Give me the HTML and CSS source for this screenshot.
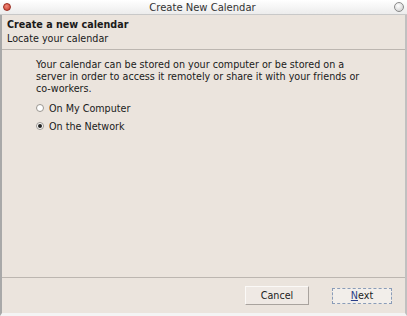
FILE: index.html
```html
<!DOCTYPE html>
<html lang="en">
<head>
<meta charset="UTF-8" />
<title>Create New Calendar</title>
<link rel="stylesheet" href="styles.css">
</head>
<body>
  <div class="window">
    <div class="titlebar">
      <span class="dot close"></span>
      <span class="title">Create New Calendar</span>
      <span class="dot max"></span>
    </div>

    <div class="frame">
      <div class="header">
        <div class="heading">Create a new calendar</div>
        <div class="subheading">Locate your calendar</div>
      </div>

      <div class="content">
        <p class="intro">Your calendar can be stored on your computer or be stored on a server in order to access it remotely or share it with your friends or co-workers.</p>
        <label class="radio"><span class="circle"></span>On My Computer</label>
        <label class="radio"><span class="circle checked"></span>On the Network</label>
      </div>

      <div class="footer">
        <button class="btn">Cancel</button>
        <button class="btn focused"><u>N</u>ext</button>
      </div>
    </div>
  </div>
</body>
</html>
```

FILE: styles.css
```css
html, body {
  margin: 0;
  padding: 0;
}
body {
  font-family: 'DejaVu Sans', Verdana, sans-serif;
  font-size: 9.6px;
  color: #1a1a1a;
  background: #ffffff;
}
.window {
  width: 407px;
  height: 316px;
  display: flex;
  flex-direction: column;
}
.titlebar {
  height: 14px;
  display: flex;
  align-items: center;
  padding: 0 3px;
  background: linear-gradient(#ffffff, #ececec);
  border-bottom: 1px solid #c8c8c8;
}
.title {
  flex: 1;
  text-align: center;
  font-size: 10px;
  color: #333;
}
.dot {
  width: 8px;
  height: 8px;
  border-radius: 50%;
  box-sizing: border-box;
}
.dot.close {
  background: radial-gradient(circle at 40% 35%, #f08a7a, #c83a2a);
  border: 1px solid #9a2a1e;
}
.dot.max {
  width: 10px;
  height: 10px;
  background: radial-gradient(circle at 40% 35%, #ffffff, #c8c8c8);
  border: 1.5px solid #8a8a8a;
}
.frame {
  flex: 1;
  display: flex;
  flex-direction: column;
  background: #ebe4dd;
  border-left: 2px solid #a8a8a8;
  border-right: 2px solid #c0c0c0;
  border-bottom: 3px solid #f4f4f4;
}
.header {
  padding: 3px 5px 3px;
  border-bottom: 1px solid #bcb6b0;
  line-height: 14px;
}
.heading {
  font-weight: bold;
}
.content {
  flex: 1;
  padding: 9px 35px 0 34px;
}
.intro {
  margin: 0 0 4px;
  line-height: 12px;
}
.radio {
  display: flex;
  align-items: center;
  height: 18px;
}
.circle {
  width: 8px;
  height: 8px;
  border-radius: 50%;
  box-sizing: border-box;
  border: 1px solid #9a9690;
  background: #fff;
  margin-right: 5px;
  position: relative;
}
.circle.checked::after {
  content: '';
  position: absolute;
  left: 1px;
  top: 1px;
  width: 4px;
  height: 4px;
  border-radius: 50%;
  background: #222;
}
.footer {
  border-top: 1px solid #bcb6b0;
  height: 35px;
  display: flex;
  justify-content: flex-end;
  align-items: center;
  gap: 23px;
  padding-right: 13px;
}
.btn {
  font-family: inherit;
  font-size: 9.6px;
  color: #222;
  width: 64px;
  height: 19px;
  background: #efe9e4;
  border: 1px solid;
  border-color: #fbf9f7 #a9a39e #a9a39e #fbf9f7;
  padding: 0;
}
.btn.focused {
  width: 60px;
  height: 16px;
  border: 1px dashed #8a9cb8;
  background: #f2eeea;
}
.btn u {
  color: #2a3e88;
}
```
